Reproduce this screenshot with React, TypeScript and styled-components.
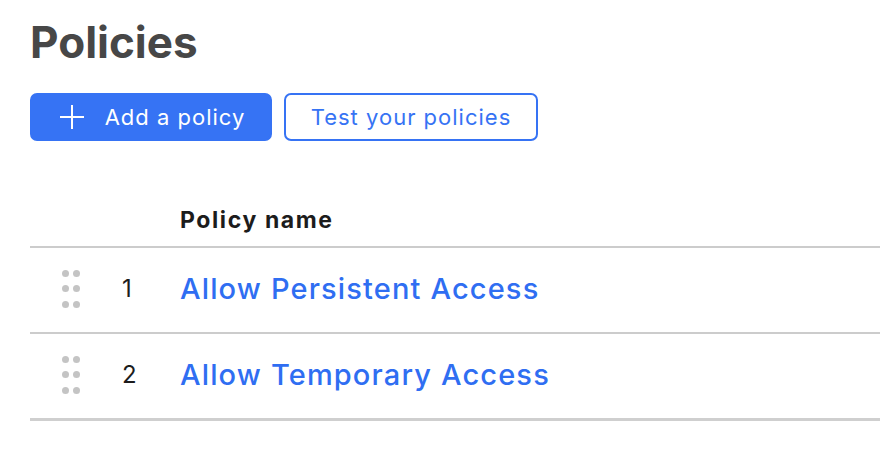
import React from "react";
import styled, { createGlobalStyle } from "styled-components";

const Global = createGlobalStyle`
  html, body { margin: 0; padding: 0; background: #fff; }
  body { font-family: Inter, "Noto Sans", sans-serif; }
`;

const Page = styled.div`
  padding: 13px 0 0 30px;
`;

const Title = styled.h1`
  margin: 0;
  font-size: 44px;
  line-height: 58px;
  font-weight: 700;
  color: #474747;
  letter-spacing: 0;
`;

const Toolbar = styled.div`
  display: flex;
  gap: 12px;
  margin-top: 22px;
`;

const Button = styled.button<{ $primary?: boolean }>`
  box-sizing: border-box;
  height: 48px;
  display: flex;
  align-items: center;
  justify-content: center;
  gap: 21px;
  border-radius: 7px;
  font-family: Inter, sans-serif;
  font-size: 22px;
  font-weight: 400;
  letter-spacing: 1px;
  cursor: pointer;
  border: 2px solid #3673f4;
  background: ${(p) => (p.$primary ? "#3673f4" : "#fff")};
  color: ${(p) => (p.$primary ? "#fff" : "#3673f4")};
  width: ${(p) => (p.$primary ? "242px" : "254px")};
  padding: ${(p) => (p.$primary ? "0 0 0 3px" : "0")};
`;

const Table = styled.div`
  margin-top: 64px;
`;

const HeaderRow = styled.div`
  display: grid;
  grid-template-columns: 150px 1fr;
  height: 41px;
  align-items: start;
  border-bottom: 2px solid #cccccc;
`;

const HeaderCell = styled.div`
  font-size: 23px;
  font-weight: 700;
  color: #1c1c1c;
  line-height: 28px;
  letter-spacing: 1.6px;
  padding-top: 1px;
`;

const Row = styled.div<{ $last?: boolean }>`
  box-sizing: border-box;
  display: grid;
  grid-template-columns: 92px 58px 1fr;
  align-items: center;
  height: ${(p) => (p.$last ? "87px" : "86px")};
  padding-bottom: 3px;
  border-bottom: ${(p) => (p.$last ? "3px solid #cfcfcf" : "2px solid #cccccc")};
`;

const Handle = styled.div`
  display: grid;
  grid-template-columns: repeat(2, 7px);
  gap: 8.5px 4px;
  margin-left: 32px;
  span {
    width: 7px;
    height: 7px;
    border-radius: 50%;
    background: #c4c4c4;
  }
`;

const Num = styled.div`
  font-size: 24px;
  color: #1c1c1c;
`;

const Link = styled.a`
  font-size: 29px;
  font-weight: 500;
  letter-spacing: 1.15px;
  color: #2f6ef2;
  text-decoration: none;
`;

const PlusIcon = () => (
  <svg width="24" height="24" viewBox="0 0 24 24">
    <path d="M12 0v24M0 12h24" stroke="#fff" strokeWidth="2" />
  </svg>
);

const DragHandle = () => (
  <Handle>
    {Array.from({ length: 6 }).map((_, i) => (
      <span key={i} />
    ))}
  </Handle>
);

const policies = ["Allow Persistent Access", "Allow Temporary Access"];

export default function App() {
  return (
    <Page>
      <Global />
      <Title>Policies</Title>
      <Toolbar>
        <Button $primary>
          <PlusIcon />
          Add a policy
        </Button>
        <Button>Test your policies</Button>
      </Toolbar>
      <Table>
        <HeaderRow>
          <div />
          <HeaderCell>Policy name</HeaderCell>
        </HeaderRow>
        {policies.map((p, i) => (
          <Row key={p} $last={i === policies.length - 1}>
            <DragHandle />
            <Num>{i + 1}</Num>
            <Link href="#">{p}</Link>
          </Row>
        ))}
      </Table>
    </Page>
  );
}
